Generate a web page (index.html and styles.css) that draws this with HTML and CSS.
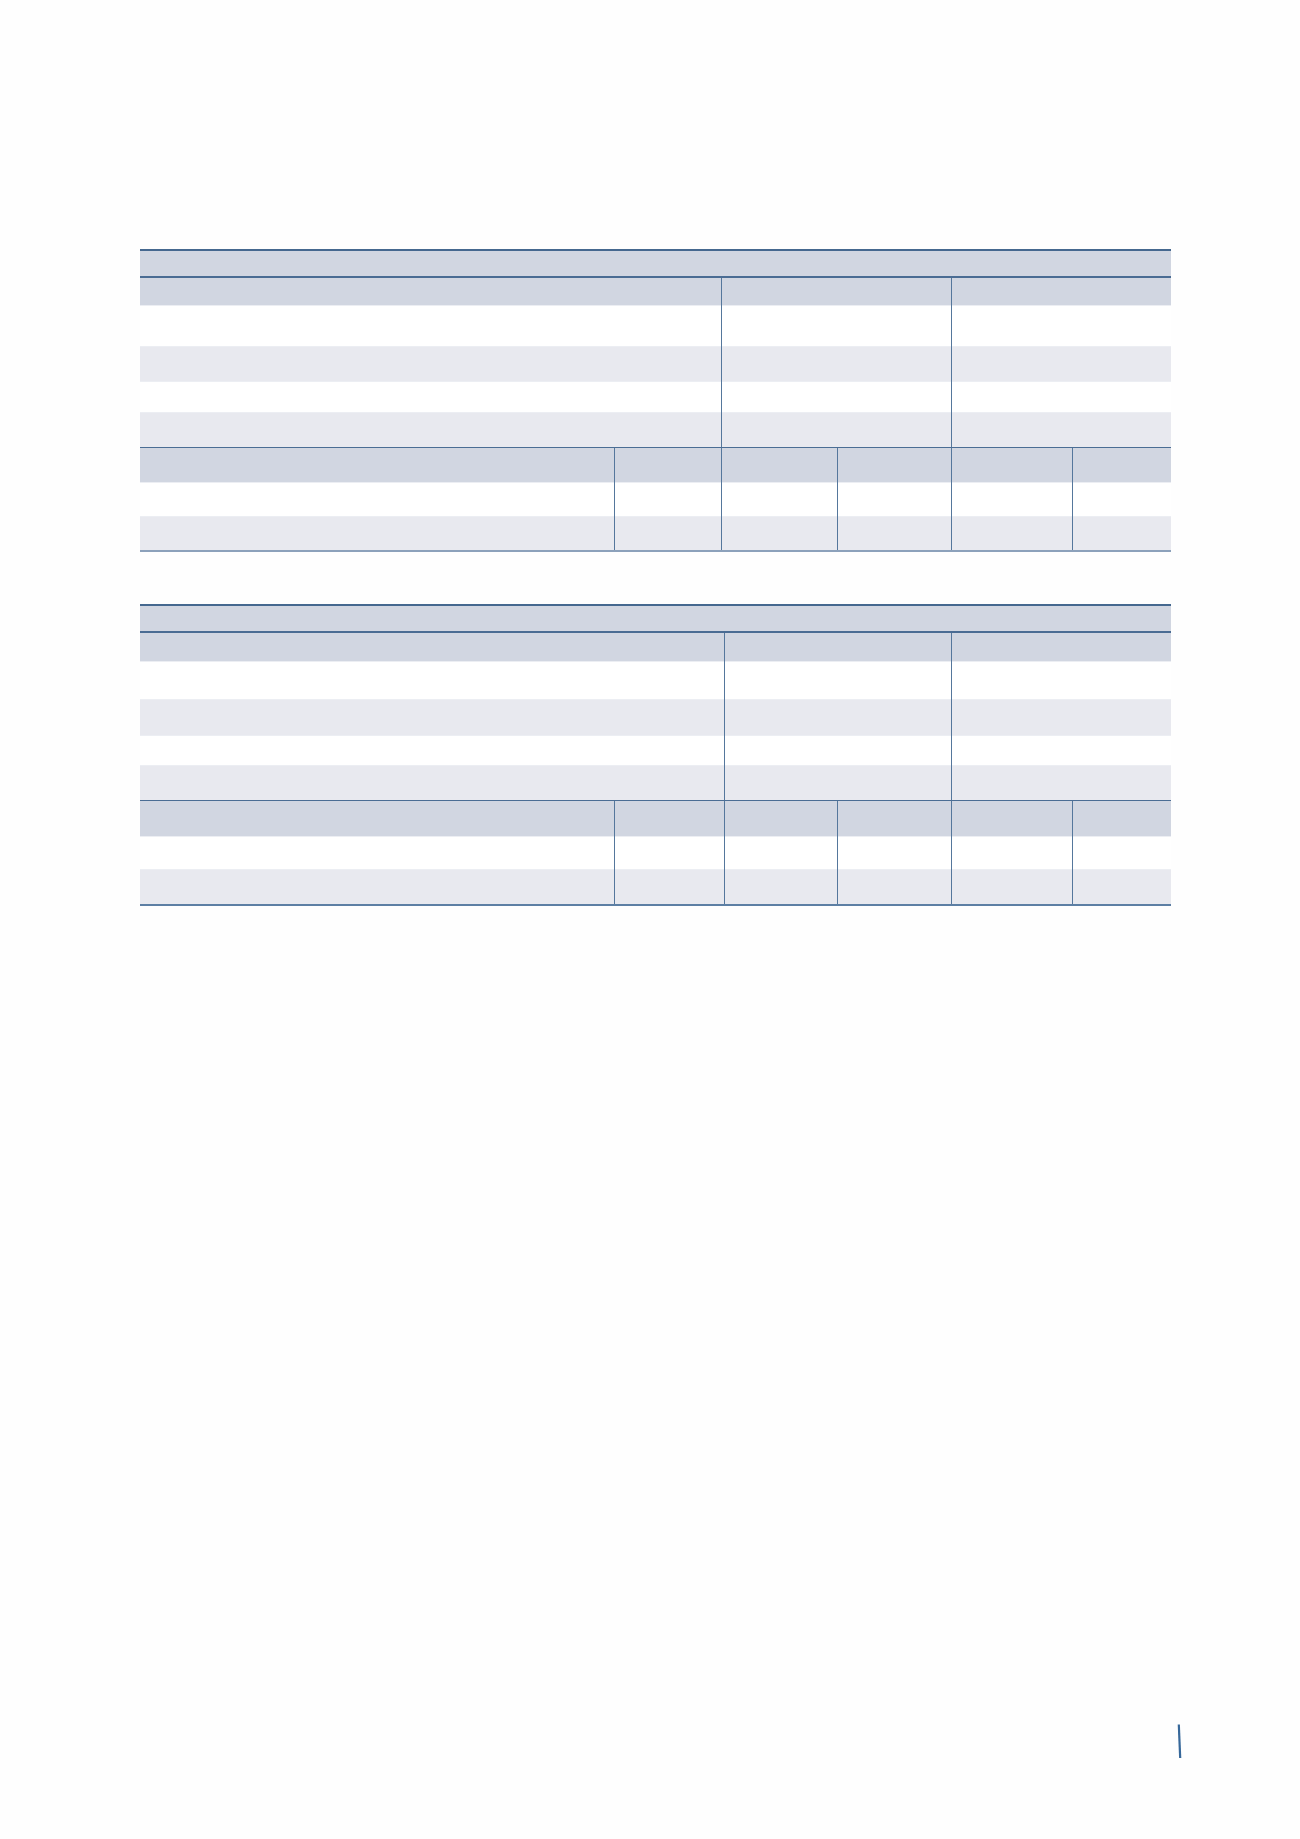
FILE: index.html
```html
<!DOCTYPE html>
<html lang="de">
<head>
<meta charset="utf-8">
<title>Tabellen</title>
<link rel="stylesheet" href="styles.css">
</head>
<body>
<main class="page">
  <section class="tbl tbl-a">
    <div class="row title"><div class="cell"></div></div>
    <div class="row sub head h27"><div class="cell c12"></div><div class="cell c34 vl"></div><div class="cell c56 vl"></div></div>
    <div class="row sub white h41"><div class="cell c12"></div><div class="cell c34 vl"></div><div class="cell c56 vl"></div></div>
    <div class="row sub grey h35"><div class="cell c12"></div><div class="cell c34 vl"></div><div class="cell c56 vl"></div></div>
    <div class="row sub white h31"><div class="cell c12"></div><div class="cell c34 vl"></div><div class="cell c56 vl"></div></div>
    <div class="row sub grey h35"><div class="cell c12"></div><div class="cell c34 vl"></div><div class="cell c56 vl"></div></div>
    <div class="row full head2 h34"><div class="cell"></div><div class="cell vl"></div><div class="cell vl"></div><div class="cell vl"></div><div class="cell vl"></div><div class="cell vl"></div></div>
    <div class="row full white h34"><div class="cell"></div><div class="cell vl"></div><div class="cell vl"></div><div class="cell vl"></div><div class="cell vl"></div><div class="cell vl"></div></div>
    <div class="row full grey h34 last"><div class="cell"></div><div class="cell vl"></div><div class="cell vl"></div><div class="cell vl"></div><div class="cell vl"></div><div class="cell vl"></div></div>
  </section>

  <section class="tbl tbl-b">
    <div class="row title"><div class="cell"></div></div>
    <div class="row sub head h28"><div class="cell c12"></div><div class="cell c34 vl"></div><div class="cell c56 vl"></div></div>
    <div class="row sub white h38"><div class="cell c12"></div><div class="cell c34 vl"></div><div class="cell c56 vl"></div></div>
    <div class="row sub grey h36"><div class="cell c12"></div><div class="cell c34 vl"></div><div class="cell c56 vl"></div></div>
    <div class="row sub white h30"><div class="cell c12"></div><div class="cell c34 vl"></div><div class="cell c56 vl"></div></div>
    <div class="row sub grey h35"><div class="cell c12"></div><div class="cell c34 vl"></div><div class="cell c56 vl"></div></div>
    <div class="row full head2 h35"><div class="cell"></div><div class="cell vl"></div><div class="cell vl"></div><div class="cell vl"></div><div class="cell vl"></div><div class="cell vl"></div></div>
    <div class="row full white h33"><div class="cell"></div><div class="cell vl"></div><div class="cell vl"></div><div class="cell vl"></div><div class="cell vl"></div><div class="cell vl"></div></div>
    <div class="row full grey h35 last"><div class="cell"></div><div class="cell vl"></div><div class="cell vl"></div><div class="cell vl"></div><div class="cell vl"></div><div class="cell vl"></div></div>
  </section>

  <footer class="pager">
    <svg class="pager-mark" width="6" height="36" viewBox="0 0 6 36" aria-hidden="true">
      <line x1="1.8" y1="0.5" x2="3.2" y2="34" stroke="#37689a" stroke-width="2.2" stroke-linecap="butt"/>
    </svg>
  </footer>
</main>
</body>
</html>
```

FILE: styles.css
```css
html, body {
  margin: 0;
  padding: 0;
  background: #fefefe;
  font-family: "Liberation Sans", Arial, sans-serif;
}

.page {
  width: 1300px;
  height: 1839px;
  box-sizing: border-box;
  padding: 249px 0 0 140px;
  display: flex;
  flex-direction: column;
}

.tbl {
  width: 1031px;
  display: flex;
  flex-direction: column;
  border-top: 2px solid #45688f;
}

.tbl-a {
  --cols: 474px 107px 116px 114px 121px 99px;
}

.tbl-b {
  margin-top: 52px;
  --cols: 474px 110px 113px 114px 121px 99px;
}

.row {
  display: grid;
  grid-template-columns: var(--cols);
}

.cell {
  box-sizing: border-box;
  min-width: 0;
}

.c12 { grid-column: span 2; }
.c34 { grid-column: span 2; }
.c56 { grid-column: span 2; }

.vl {
  border-left: 1px solid #55779c;
}

.title {
  grid-template-columns: 1fr;
  height: 25px;
  background: #d1d6e1;
  border-bottom: 2px solid #4a6c93;
}

.head {
  background: #d1d6e1;
}

.head2 {
  background: #d1d6e1;
  border-top: 1px solid #4a6d94;
}

.white { background: #ffffff; }
.grey { background: #e8e9ef; }

.white, .grey {
  box-shadow: inset 0 1px 0 #eceef3;
}

.h27 { height: 27px; }
.h28 { height: 28px; }
.h30 { height: 30px; }
.h31 { height: 31px; }
.h33 { height: 33px; }
.h34 { height: 34px; }
.h35 { height: 35px; }
.h36 { height: 36px; }
.h38 { height: 38px; }
.h41 { height: 41px; }

.last {
  border-bottom: 2px solid #8ca1bb;
}

.tbl-b .last {
  border-bottom-color: #5d7fa4;
}

.pager {
  display: flex;
  margin-top: auto;
  margin-bottom: 79px;
  padding-left: 1037px;
}

.pager-mark {
  display: block;
}
```
